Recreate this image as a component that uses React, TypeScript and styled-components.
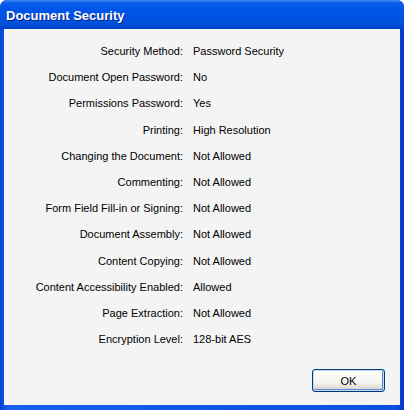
import React from 'react';
import styled, { createGlobalStyle } from 'styled-components';

const GlobalStyle = createGlobalStyle`
  html, body {
    margin: 0;
    padding: 0;
    background: #fff;
  }
  body {
    font-family: Tahoma, 'Liberation Sans', Arial, sans-serif;
  }
`;

const Window = styled.div`
  width: 404px;
  height: 410px;
  box-sizing: border-box;
  display: flex;
  flex-direction: column;
  background: #0831d9;
  border-radius: 7px 7px 0 0;
  overflow: hidden;
`;

const TitleBar = styled.div`
  height: 29px;
  flex: none;
  display: flex;
  align-items: center;
  padding: 1px 6px 0;
  box-sizing: border-box;
  background: linear-gradient(
    to bottom,
    #3c8cf4 0%,
    #0a5ce8 10%,
    #0055ea 30%,
    #0054e3 60%,
    #0250d8 85%,
    #003cc8 100%
  );
  h1 {
    margin: 0;
    font-family: 'Liberation Sans', Arial, sans-serif;
    font-size: 13px;
    font-weight: bold;
    color: #fff;
    text-shadow: 1px 1px 0 #0a1e8a;
  }
`;

const Frame = styled.div`
  flex: 1;
  display: flex;
  flex-direction: column;
  padding: 0 4px 5px 4px;
  background: linear-gradient(to right, #0842d8, #1660f0 2%, #0a4fe0 98%, #0633c8);
`;

const Body = styled.div`
  flex: 1;
  background: #f4f4f4;
  display: flex;
  flex-direction: column;
  padding: 14px 0 0 0;
  font-family: 'Liberation Sans', Arial, sans-serif;
  font-size: 11px;
  color: #000;
`;

const InfoGrid = styled.dl`
  margin: 0;
  display: grid;
  grid-template-columns: 179px 1fr;
  column-gap: 10px;
  grid-auto-rows: 26.2px;
  dt,
  dd {
    margin: 0;
    line-height: 16px;
  }
  dt {
    text-align: right;
  }
`;

const Footer = styled.div`
  margin-top: auto;
  display: flex;
  justify-content: flex-end;
  padding: 0 15px 13px 0;
`;

const OkButton = styled.button`
  width: 73px;
  height: 23px;
  box-sizing: border-box;
  border: 1px solid #003c74;
  border-radius: 3px;
  background: linear-gradient(to bottom, #ffffff 0%, #f4f4f0 60%, #d6d0c5 100%);
  box-shadow: inset 0 0 0 1px #c6d8f6, inset -1px -1px 0 1px #5b8bd8;
  font-family: 'Liberation Sans', Arial, sans-serif;
  font-size: 11px;
  color: #000;
  padding: 0;
`;

const rows: [string, string][] = [
  ['Security Method:', 'Password Security'],
  ['Document Open Password:', 'No'],
  ['Permissions Password:', 'Yes'],
  ['Printing:', 'High Resolution'],
  ['Changing the Document:', 'Not Allowed'],
  ['Commenting:', 'Not Allowed'],
  ['Form Field Fill-in or Signing:', 'Not Allowed'],
  ['Document Assembly:', 'Not Allowed'],
  ['Content Copying:', 'Not Allowed'],
  ['Content Accessibility Enabled:', 'Allowed'],
  ['Page Extraction:', 'Not Allowed'],
  ['Encryption Level:', '128-bit AES'],
];

export default function App(): JSX.Element {
  return (
    <>
      <GlobalStyle />
      <Window>
        <TitleBar>
          <h1>Document Security</h1>
        </TitleBar>
        <Frame>
          <Body>
            <InfoGrid>
              {rows.map(([label, value]) => (
                <React.Fragment key={label}>
                  <dt>{label}</dt>
                  <dd>{value}</dd>
                </React.Fragment>
              ))}
            </InfoGrid>
            <Footer>
              <OkButton>OK</OkButton>
            </Footer>
          </Body>
        </Frame>
      </Window>
    </>
  );
}
